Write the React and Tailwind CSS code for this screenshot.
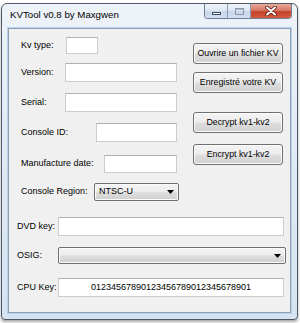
const FONT = "font-['Liberation_Sans',Arial,sans-serif]";

function TextBox({ w, h, children }) {
  return (
    <div
      className={`${w} ${h} border border-[#c9ccd1] border-t-[#aeb1b6] bg-white flex items-center justify-center text-[9px] text-black`}
    >
      {children}
    </div>
  );
}

function Button({ children, mt }) {
  return (
    <div
      className={`${mt} w-[90px] h-[21px] rounded-[3px] border border-[#707070] bg-[linear-gradient(to_bottom,#f4f4f4_0%,#ececec_48%,#dedede_52%,#d0d0d0_100%)] shadow-[inset_0_0_0_1px_#fbfbfb] flex items-center justify-center text-[8.8px] text-black whitespace-nowrap`}
    >
      {children}
    </div>
  );
}

function Arrow() {
  return (
    <svg width="7" height="4" viewBox="0 0 7 4">
      <path d="M0 0 H7 L3.5 4 Z" fill="#000" />
    </svg>
  );
}

function Combo({ w, h, text }) {
  return (
    <div
      className={`${w} ${h} rounded-[2px] border border-[#707070] bg-[linear-gradient(to_bottom,#f4f4f4_0%,#ececec_48%,#dedede_52%,#d0d0d0_100%)] shadow-[inset_0_0_0_1px_#fbfbfb] flex items-center pl-[4px] pr-[4px] text-[9px] text-black`}
    >
      <span>{text}</span>
      <span className="ml-auto flex items-center">
        <Arrow />
      </span>
    </div>
  );
}

export default function App() {
  return (
    <div className={`w-[300px] h-[323px] bg-white pt-[3px] pl-[1px] ${FONT}`}>
      <div className="w-[297px] h-[317px] border border-[#4e5866] rounded-t-[6px] rounded-b-[4px] bg-[linear-gradient(to_bottom,#eef3f9_0%,#e2ebf5_40%,#d6e3f1_100%)] shadow-[0_2px_3px_rgba(0,0,0,0.35)] flex flex-col overflow-hidden">
        {/* Title bar */}
        <div className="h-[24px] shrink-0 flex items-start">
          <div className="pl-[8px] pt-[5px] text-[9.7px] leading-[12px] text-black whitespace-nowrap">
            KVTool v0.8 by Maxgwen
          </div>
          <div className="ml-auto mr-[5px] flex h-[15px] rounded-b-[4px] border border-t-0 border-[#6f7f95] overflow-hidden">
            <div className="w-[23px] h-full bg-[linear-gradient(to_bottom,#eef3fa_0%,#dde7f3_45%,#c6d6ea_55%,#d3e1f1_100%)] border-r border-[#8a9cb3] flex items-end justify-center pb-[3px]">
              <div className="w-[9px] h-[3px] bg-white border border-[#3b4a5e]" />
            </div>
            <div className="w-[23px] h-full bg-[linear-gradient(to_bottom,#eef3fa_0%,#dde7f3_45%,#c6d6ea_55%,#d3e1f1_100%)] border-r border-[#8a9cb3] flex items-center justify-center">
              <div className="w-[9px] h-[7px] border border-[#8a97a8] bg-transparent shadow-[inset_0_1px_0_#b5c2d2]" />
            </div>
            <div className="w-[40px] h-full bg-[linear-gradient(to_bottom,#e9a99a_0%,#d77a64_45%,#c4432c_55%,#d35a3f_100%)] flex items-center justify-center">
              <svg width="12" height="10" viewBox="0 0 12 10">
                <path d="M2 1.5 L10 8.5 M10 1.5 L2 8.5" stroke="#5a1a10" strokeWidth="3.6" strokeLinecap="round" />
                <path d="M2 1.5 L10 8.5 M10 1.5 L2 8.5" stroke="#ffffff" strokeWidth="2" strokeLinecap="round" />
              </svg>
            </div>
          </div>
        </div>

        {/* Client area */}
        <div className="ml-[6px] w-[283px] h-[285px] shrink-0 border border-[#8fa0b4] shadow-[0_0_0_1px_#b9d2ec] bg-[#f0f0f0] flex flex-col text-[9px] text-black">
          <div className="flex">
            {/* Left column */}
            <div className="w-[184px] pl-[12px] flex flex-col">
              <div className="mt-[8px] h-[17px] flex items-center">
                <span className="w-[45px]">Kv type:</span>
                <TextBox w="w-[32px]" h="h-[17px]" />
              </div>
              <div className="mt-[9px] h-[19px] flex items-center">
                <span className="w-[44px]">Version:</span>
                <TextBox w="w-[112px]" h="h-[19px]" />
              </div>
              <div className="mt-[11px] h-[19px] flex items-center">
                <span className="w-[44px]">Serial:</span>
                <TextBox w="w-[112px]" h="h-[19px]" />
              </div>
              <div className="mt-[11px] h-[19px] flex items-center">
                <span className="w-[75px]">Console ID:</span>
                <TextBox w="w-[81px]" h="h-[19px]" />
              </div>
              <div className="mt-[13px] h-[18px] flex items-center">
                <span className="w-[83px] whitespace-nowrap">Manufacture date:</span>
                <TextBox w="w-[73px]" h="h-[18px]" />
              </div>
              <div className="mt-[10px] h-[18px] flex items-center">
                <span className="w-[73px] whitespace-nowrap">Console Region:</span>
                <Combo w="w-[85px]" h="h-[18px]" text="NTSC-U" />
              </div>
            </div>
            {/* Right column */}
            <div className="flex flex-col">
              <Button mt="mt-[14px]">Ouvrire un fichier KV</Button>
              <Button mt="mt-[8px]">Enregistré votre KV</Button>
              <Button mt="mt-[19px]">Decrypt kv1-kv2</Button>
              <Button mt="mt-[11px]">Encrypt kv1-kv2</Button>
            </div>
          </div>

          {/* Bottom section */}
          <div className="pl-[8px] flex flex-col">
            <div className="mt-[16px] h-[19px] flex items-center">
              <span className="w-[41px] whitespace-nowrap">DVD key:</span>
              <TextBox w="w-[226px]" h="h-[19px]" />
            </div>
            <div className="mt-[11px] h-[17px] flex items-center">
              <span className="w-[41px]">OSIG:</span>
              <Combo w="w-[228px]" h="h-[17px]" text="" />
            </div>
            <div className="mt-[14px] h-[19px] flex items-center">
              <span className="w-[41px] whitespace-nowrap">CPU Key:</span>
              <TextBox w="w-[226px]" h="h-[19px]">
                01234567890123456789012345678901
              </TextBox>
            </div>
          </div>
        </div>
      </div>
    </div>
  );
}
